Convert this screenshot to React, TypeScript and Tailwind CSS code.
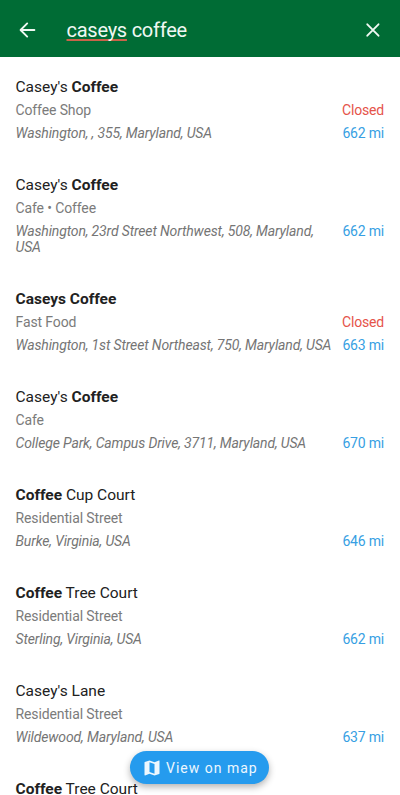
import React from "react";

type Part = { t: string; b?: boolean };
type Result = { name: Part[]; kind: string; address: string; distance: string; closed?: boolean };

const results: Result[] = [
  { name: [{ t: "Casey's " }, { t: "Coffee", b: true }], kind: "Coffee Shop", address: "Washington, , 355, Maryland, USA", distance: "662 mi", closed: true },
  { name: [{ t: "Casey's " }, { t: "Coffee", b: true }], kind: "Cafe • Coffee", address: "Washington, 23rd Street Northwest, 508, Maryland, USA", distance: "662 mi" },
  { name: [{ t: "Caseys Coffee", b: true }], kind: "Fast Food", address: "Washington, 1st Street Northeast, 750, Maryland, USA", distance: "663 mi", closed: true },
  { name: [{ t: "Casey's " }, { t: "Coffee", b: true }], kind: "Cafe", address: "College Park, Campus Drive, 3711, Maryland, USA", distance: "670 mi" },
  { name: [{ t: "Coffee", b: true }, { t: " Cup Court" }], kind: "Residential Street", address: "Burke, Virginia, USA", distance: "646 mi" },
  { name: [{ t: "Coffee", b: true }, { t: " Tree Court" }], kind: "Residential Street", address: "Sterling, Virginia, USA", distance: "662 mi" },
  { name: [{ t: "Casey's Lane" }], kind: "Residential Street", address: "Wildewood, Maryland, USA", distance: "637 mi" },
];

function ResultName({ parts }: { parts: Part[] }) {
  return (
    <h2 className="text-[15.5px] leading-5 text-[#212121]">
      {parts.map((p, i) => (
        <span key={i} className={p.b ? "font-bold" : ""}>{p.t}</span>
      ))}
    </h2>
  );
}

function ResultRow({ r }: { r: Result }) {
  return (
    <li className="pr-4 pl-[15.5px] pt-5 pb-[14px]">
      <ResultName parts={r.name} />
      <div className="mt-[3px] flex justify-between text-[14px] leading-5 tracking-[-0.12px]">
        <span className="text-[#7b7b7b]">{r.kind}</span>
        {r.closed && <span className="tracking-[-0.18px] text-[#e5534a]">Closed</span>}
      </div>
      <div className="mt-[5px] flex justify-between gap-2 text-[14px] leading-4 tracking-[-0.14px]">
        <span className="italic text-[#757575]">{r.address}</span>
        <span className="shrink-0 tracking-[-0.2px] text-[#379fe3]">{r.distance}</span>
      </div>
    </li>
  );
}

export default function App() {
  return (
    <div className="relative flex h-[795px] w-[400px] flex-col overflow-hidden bg-white font-[Roboto,sans-serif]">
      <header className="flex h-[57px] shrink-0 items-center bg-[#006c35] pr-[15px] pl-[15px] pt-[3px] text-[#f0f8f3]">
        <svg viewBox="0 0 24 24" className="h-6 w-6" fill="none" stroke="currentColor" strokeWidth="1.9" strokeLinecap="round" strokeLinejoin="round">
          <path d="M19.4 12H5.8M12.2 5.4 5.6 12l6.6 6.6" />
        </svg>
        <div className="ml-[27.5px] flex-1 text-[20px] leading-6 tracking-[-0.25px]">
          <span className="underline decoration-[#c9644a] decoration-2 underline-offset-2 [text-decoration-skip-ink:none]">caseys</span> coffee
        </div>
        <svg viewBox="0 0 24 24" className="h-6 w-6" fill="none" stroke="currentColor" strokeWidth="1.9" strokeLinecap="round">
          <path d="m6.3 6.3 11.2 11.4M17.5 6.3 6.3 17.7" />
        </svg>
      </header>
      <ul>
        {results.map((r, i) => <ResultRow key={i} r={r} />)}
        <li className="pr-4 pl-[15.5px] pt-5">
          <ResultName parts={[{ t: "Coffee", b: true }, { t: " Tree Court" }]} />
        </li>
      </ul>
      <button className="absolute left-[130px] top-[751px] flex h-[33px] w-[139px] items-center rounded-full bg-[#259bee] pl-3 pt-px text-[14px] tracking-[1px] whitespace-nowrap text-[#edf7fe] shadow-[0_3px_7px_rgba(0,0,0,0.3)]">
        <svg viewBox="0 0 24 24" className="mr-1 h-5 w-5 shrink-0" fill="currentColor">
          <path d="M20.5 3l-.16.03L15 5.1 9 3 3.36 4.9c-.21.07-.36.25-.36.48V20.5c0 .28.22.5.5.5l.16-.03L9 18.9l6 2.1 5.64-1.9c.21-.07.36-.25.36-.48V3.5c0-.28-.22-.5-.5-.5zM15 19l-6-2.11V5l6 2.11V19z" />
        </svg>
        View on map
      </button>
    </div>
  );
}
